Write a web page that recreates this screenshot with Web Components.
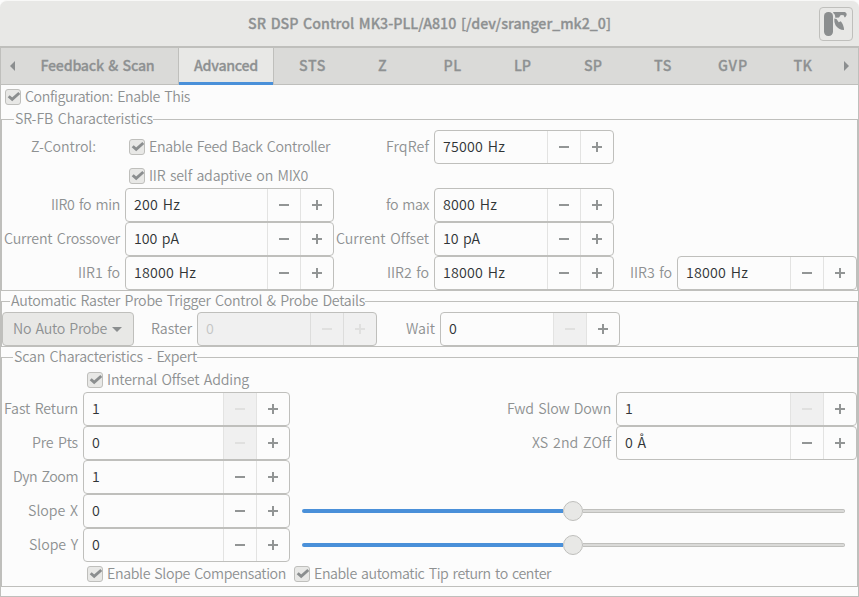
<!DOCTYPE html>
<html lang="en"><head><meta charset="utf-8"><title>SR DSP Control</title>
<style>
html,body{margin:0;height:597px;overflow:hidden;background:#fcfcfc}
body{font:14.2px/20px "Noto Sans CJK SC","Noto Sans",sans-serif;font-weight:350;word-spacing:1.5px;color:#8e9192}
dsp-window{--line:#bfbfbc}
.g1{display:grid;grid-template-columns:123px 209px 100px 180px 63px 180px;grid-template-rows:34px 24px 34px 34px 34px}
.g2{display:grid;grid-template-columns:132px 63px 180px 63px 180px;grid-template-rows:34px}
.g3{display:grid;grid-template-columns:81px 207px 326px 241px;grid-template-rows:24px repeat(5,34px) 24px}
.c{justify-self:center;padding:0}
.s2{grid-column:2}.w34{grid-column:3/5}
</style></head><body>
<dsp-window>
 <title-bar slot="head"><fit-text w="363">SR DSP Control MK3-PLL/A810 [/dev/sranger_mk2_0]</fit-text></title-bar>
 <tab-strip slot="head">
  <tab-item style="width:161px;padding-right:2px"><fit-text w="114">Feedback &amp; Scan</fit-text></tab-item>
  <tab-item active style="width:94px"><fit-text w="64">Advanced</fit-text></tab-item>
  <tab-item style="width:79px"><fit-text w="27">STS</fit-text></tab-item>
  <tab-item style="width:61px"><fit-text w="9">Z</fit-text></tab-item>
  <tab-item style="width:79px"><fit-text w="18">PL</fit-text></tab-item>
  <tab-item style="width:61px"><fit-text w="17">LP</fit-text></tab-item>
  <tab-item style="width:80px"><fit-text w="18">SP</fit-text></tab-item>
  <tab-item style="width:60px"><fit-text w="18">TS</fit-text></tab-item>
  <tab-item style="width:80px"><fit-text w="30">GVP</fit-text></tab-item>
  <tab-item style="width:60px"><fit-text w="19">TK</fit-text></tab-item>
 </tab-strip>
 <check-box style="padding-left:4px"><fit-text w="165">Configuration: Enable This</fit-text></check-box>
 <group-frame style="--indent:12px"><fit-text slot="legend" w="138">SR-FB Characteristics</fit-text>
  <div class="g1">
   <field-label class="c"><fit-text w="65">Z-Control:</fit-text></field-label>
   <check-box><fit-text w="181">Enable Feed Back Controller</fit-text></check-box>
   <field-label><fit-text w="43">FrqRef</fit-text></field-label><spin-box><fit-text w="62">75000 Hz</fit-text></spin-box>
   <check-box class="s2" style="grid-row:2"><fit-text w="159">IIR self adaptive on MIX0</fit-text></check-box>
   <field-label style="grid-row:3;grid-column:1"><fit-text w="69">IIR0 fo min</fit-text></field-label><spin-box style="grid-row:3"><fit-text w="46">200 Hz</fit-text></spin-box>
   <field-label style="grid-row:3"><fit-text w="43">fo max</fit-text></field-label><spin-box style="grid-row:3"><fit-text w="54">8000 Hz</fit-text></spin-box>
   <field-label style="grid-row:4;grid-column:1"><fit-text w="116">Current Crossover</fit-text></field-label><spin-box style="grid-row:4"><fit-text w="45">100 pA</fit-text></spin-box>
   <field-label style="grid-row:4"><fit-text w="93">Current Offset</fit-text></field-label><spin-box style="grid-row:4"><fit-text w="37">10 pA</fit-text></spin-box>
   <field-label style="grid-row:5;grid-column:1"><fit-text w="42">IIR1 fo</fit-text></field-label><spin-box style="grid-row:5"><fit-text w="62">18000 Hz</fit-text></spin-box>
   <field-label style="grid-row:5"><fit-text w="42">IIR2 fo</fit-text></field-label><spin-box style="grid-row:5"><fit-text w="62">18000 Hz</fit-text></spin-box>
   <field-label style="grid-row:5"><fit-text w="42">IIR3 fo</fit-text></field-label><spin-box style="grid-row:5"><fit-text w="62">18000 Hz</fit-text></spin-box>
  </div></group-frame>
 <group-frame style="--indent:8px"><fit-text slot="legend" w="354">Automatic Raster Probe Trigger Control &amp; Probe Details</fit-text>
  <div class="g2">
   <drop-button><fit-text w="94">No Auto Probe</fit-text></drop-button>
   <field-label><fit-text w="41">Raster</fit-text></field-label><spin-box disabled><fit-text w="9">0</fit-text></spin-box>
   <field-label><fit-text w="29">Wait</fit-text></field-label><spin-box floor><fit-text w="9">0</fit-text></spin-box>
  </div></group-frame>
 <group-frame style="--indent:11px"><fit-text slot="legend" w="183">Scan Characteristics - Expert</fit-text>
  <div class="g3">
   <check-box class="s2"><fit-text w="142">Internal Offset Adding</fit-text></check-box>
   <field-label style="grid-column:1"><fit-text w="74">Fast Return</fit-text></field-label><spin-box floor><fit-text w="9">1</fit-text></spin-box>
   <field-label><fit-text w="104">Fwd Slow Down</fit-text></field-label><spin-box floor><fit-text w="9">1</fit-text></spin-box>
   <field-label><fit-text w="46">Pre Pts</fit-text></field-label><spin-box floor><fit-text w="9">0</fit-text></spin-box>
   <field-label><fit-text w="79">XS 2nd ZOff</fit-text></field-label><spin-box><fit-text w="21">0 Å</fit-text></spin-box>
   <field-label><fit-text w="65">Dyn Zoom</fit-text></field-label><spin-box><fit-text w="9">1</fit-text></spin-box>
   <field-label style="grid-column:1"><fit-text w="50">Slope X</fit-text></field-label><spin-box><fit-text w="9">0</fit-text></spin-box><value-slider class="w34"></value-slider>
   <field-label><fit-text w="49">Slope Y</fit-text></field-label><spin-box><fit-text w="9">0</fit-text></spin-box><value-slider class="w34"></value-slider>
   <check-box class="s2"><fit-text w="179">Enable Slope Compensation</fit-text></check-box>
   <check-box class="w34"><fit-text w="237">Enable automatic Tip return to center</fit-text></check-box>
  </div></group-frame>
</dsp-window>
<script>
const element=(name,html,ready)=>customElements.define(name,class extends HTMLElement{
  connectedCallback(){
    if(this.shadowRoot)return;
    this.attachShadow({mode:'open'}).innerHTML='<style>*{box-sizing:border-box}:host{box-sizing:border-box}</style>'+html;
    if(ready)ready(this);
  }
});
element('dsp-window',`<style>:host{display:flex;flex-direction:column;height:597px;background:#fcfcfc}
.head{flex:none}.body{flex:1;border:1px solid var(--line);border-top:0;min-height:0;display:flex;flex-direction:column;gap:10px}</style>
<div class="head"><slot name="head"></slot></div><div class="body"><slot></slot></div>`);
element('title-bar',`<style>:host{display:grid;grid-template-columns:40px 1fr 40px;align-items:center;height:48px;background:#e8e8e6;border-top:1px solid #f8f8f7;border-bottom:2px solid var(--line);border-radius:7px 7px 0 0;font-weight:500;-webkit-text-stroke:.3px #8e9192}
.t{grid-column:2;justify-self:center}.b{width:34px;height:34px;border:1px solid var(--line);border-radius:4px;display:block}</style>
<span class="t"><slot></slot></span><span class="b"><svg width="32" height="32" viewBox="0 0 32 32" fill="#8b8e8f"><rect x="4" y="4" width="9" height="24" rx="4.2"/><path d="M13.2 4H25Q27 5 26.7 7L25.3 9.3H24.3L24 7.5 22 7 20.5 7.3 19 9.6 15.3 9.8Q15.3 6 13.2 5Z"/><path d="M14.3 10.6L16.5 11 18.7 14.2 20.8 13.2Q24 17 24 22 18.5 21.8 15.5 17.2 14 14.5 14.3 10.6Z"/></svg></span>`);
element('tab-strip',`<style>:host{display:flex;height:37px;background:#dadad8;border:1px solid var(--line);border-top:0}
.a{width:17px;display:flex;align-items:center}.a.l{padding-left:9px}.a.r{margin-left:auto;padding-left:3px}</style>
<span class="a l"><svg width="5" height="10" fill="#8b8e8f"><path d="M5 0V10L0 5Z"/></svg></span><slot></slot><span class="a r"><svg width="5" height="10" fill="#8b8e8f"><path d="M0 0V10L5 5Z"/></svg></span>`);
element('tab-item',`<style>:host{display:flex;flex:none;justify-content:center;align-items:center;font-weight:500;-webkit-text-stroke:.3px #8e9192;height:36px}
:host([active]){background:#e8e8e6;box-shadow:-1px 0 var(--line),1px 0 var(--line),inset 0 -2px #4a90d9,0 1px #4a90d9}</style><slot></slot>`);
element('fit-text',`<style>:host{display:inline-block;white-space:pre;height:20px;line-height:18px}span{display:inline-block}</style><span><slot></slot></span>`,el=>{
  const want=+el.getAttribute('w'),s=el.shadowRoot.querySelector('span'),n=el.textContent.length;
  if(n>1){s.style.letterSpacing=(want-s.getBoundingClientRect().width)/n+'px'}
  el.style.width=want+'px';
});
element('check-box',`<style>:host{display:flex;flex:none;align-items:center;height:24px;padding-left:4px;gap:4px}
i{width:16px;height:16px;background:#e8e8e6;border:1px solid var(--line);border-radius:3px;display:block}svg{display:block}
:host(:not([class])){align-self:center}</style>
<i><svg width="14" height="14" viewBox="0 0 14 14" fill="none" stroke="#8b8e8f" stroke-width="2.9"><path d="M2.7 6.2L6.2 9.4 13.3 3"/></svg></i><slot></slot>`,el=>{if(el.parentElement.localName==='dsp-window')el.style.alignSelf='stretch'});
element('group-frame',`<style>:host{display:block;flex:none;border:1px solid var(--line)}
.l{display:flex;width:fit-content;height:20px;margin:-11px 0 1px var(--indent);background:#fcfcfc;padding:0 0 0 1px}</style>
<span class="l"><slot name="legend"></slot></span><slot></slot>`);
element('field-label',`<style>:host{display:flex;justify-content:flex-end;align-items:center;padding-right:5px}:host(.c){padding-right:0}</style><slot></slot>`);
element('spin-box',`<style>:host{display:grid;grid-template-columns:1fr 33px 33px;height:34px;border:1px solid var(--line);border-radius:4px;color:#303436;background:#fcfcfc;overflow:hidden}
.v{padding-left:8px;display:flex;align-items:center}b{border-left:1px solid #e3e3e2;display:grid;place-items:center;color:#929595}
:host([disabled]){background:#f0f0f0;color:#c5c6c6}:host([disabled]) b,:host([floor]) .m{color:#e0e0df}:host([disabled]) b{border-color:#dddddc}:host([floor]) .m{background:#f0f0f0}</style>
<span class="v"><slot></slot></span><b class="m"><svg width="10" height="10" fill="currentColor"><path d="M0 4h10v2H0z"/></svg></b><b><svg width="10" height="10" fill="currentColor"><path d="M0 4h10v2H0zM4 0h2v10H4z"/></svg></b>`);
element('drop-button',`<style>:host{display:flex;align-items:center;gap:5px;padding-left:10px;background:#e8e8e6;border:1px solid var(--line);border-radius:4px}</style>
<slot></slot><svg width="10" height="5" fill="#8b8e8f"><path d="M0 0H10L5 5Z"/></svg>`);
element('value-slider',`<style>:host{display:flex;align-items:center;padding:0 12px}
.f{width:261px;height:4px;background:#4a90d9;border-radius:2px 0 0 2px}.k{width:20px;height:20px;border:1px solid var(--line);border-radius:50%;background:#e8e8e6}.r{flex:1;height:4px;border:1px solid var(--line);border-left:0;border-radius:0 2px 2px 0;background:#dadad8}</style>
<span class="f"></span><span class="k"></span><span class="r"></span>`);
</script>
</body></html>
